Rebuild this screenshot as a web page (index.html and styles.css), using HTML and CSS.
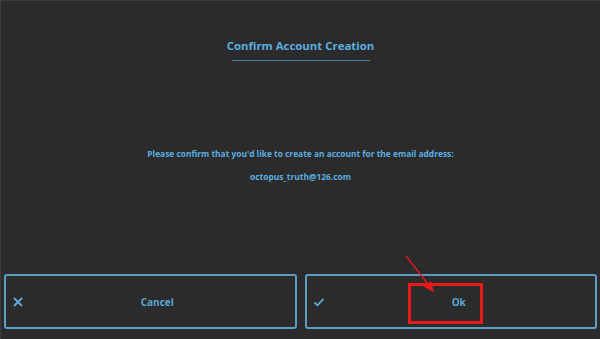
FILE: index.html
```html
<!DOCTYPE html>
<html lang="en">
<head>
  <meta charset="UTF-8">
  <meta name="viewport" content="width=device-width, initial-scale=1.0">
  <title>Confirm Account Creation</title>
  <link rel="stylesheet" href="styles.css">
</head>
<body>

  <div class="screen">
    <!-- Header -->
    <div class="header">
      <h2>Confirm Account Creation</h2>
      <div class="header-line"></div>
    </div>

    <!-- Message -->
    <div class="message">
      <p>Please confirm that you'd like to create an account for the email address:</p>
      <p class="email">octopus_truth@126.com</p>
    </div>

    <!-- Buttons -->
    <div class="actions">
      <button class="action">
        <svg class="icon" width="12" height="12" viewBox="0 0 12 12">
          <path d="M2 2 L10 10 M10 2 L2 10" stroke="#5aaee0" stroke-width="1.8" fill="none"/>
        </svg>
        <span>Cancel</span>
      </button>
      <button class="action">
        <svg class="icon" width="12" height="12" viewBox="0 0 12 12">
          <path d="M1.5 6.5 L4.5 9.3 L10.5 2.8" stroke="#5aaee0" stroke-width="1.8" fill="none"/>
        </svg>
        <span class="ok-label">Ok</span>
        <div class="highlight"></div>
      </button>
    </div>
  </div>

  <!-- Annotation arrow -->
  <svg class="arrow" width="600" height="339" viewBox="0 0 600 339">
    <line x1="406" y1="256" x2="428" y2="284" stroke="#e8181b" stroke-width="1.3"/>
    <polygon points="434,292 424,287 431,281" fill="#e8181b"/>
  </svg>

</body>
</html>
```

FILE: styles.css
```css
* {
  margin: 0;
  padding: 0;
  box-sizing: border-box;
}

body {
  font-family: 'Open Sans', sans-serif;
  background-color: #2b2b2b;
  width: 600px;
  height: 339px;
  overflow: hidden;
  position: relative;
}

.screen {
  height: 339px;
  display: flex;
  flex-direction: column;
  border-top: 1px solid #3c3c3c;
  border-left: 1px solid #3c3c3c;
}

/* Header */
.header {
  margin-top: 37px;
  display: flex;
  flex-direction: column;
  align-items: center;
}

.header h2 {
  font-size: 11.4px;
  font-weight: 700;
  color: #5aaee0;
  line-height: 16px;
}

.header-line {
  width: 138px;
  height: 1px;
  margin-top: 6px;
  background-color: #4a7fa8;
}

/* Message */
.message {
  margin-top: 86px;
  text-align: center;
  color: #5aaee0;
  font-size: 8.4px;
  font-weight: 700;
}

.message p {
  line-height: 13px;
}

.message .email {
  margin-top: 10px;
}

/* Buttons */
.actions {
  margin-top: auto;
  margin-bottom: 10px;
  display: flex;
  gap: 8px;
  padding: 0 3px 0 3px;
}

.action {
  flex: 1;
  height: 55px;
  background: transparent;
  border: 2px solid #5a9ec6;
  border-radius: 3px;
  display: flex;
  align-items: center;
  justify-content: center;
  position: relative;
  font-family: 'Open Sans', sans-serif;
  font-size: 10px;
  font-weight: 700;
  color: #5aa6d6;
  padding-left: 14px;
}

.action .icon {
  position: absolute;
  left: 6px;
  top: 20px;
}

.ok-label {
  padding-left: 2px;
}

.highlight {
  position: absolute;
  left: 101px;
  top: 7px;
  width: 75px;
  height: 41px;
  border: 3px solid #e8181b;
}

.arrow {
  position: absolute;
  top: 0;
  left: 0;
}
```
